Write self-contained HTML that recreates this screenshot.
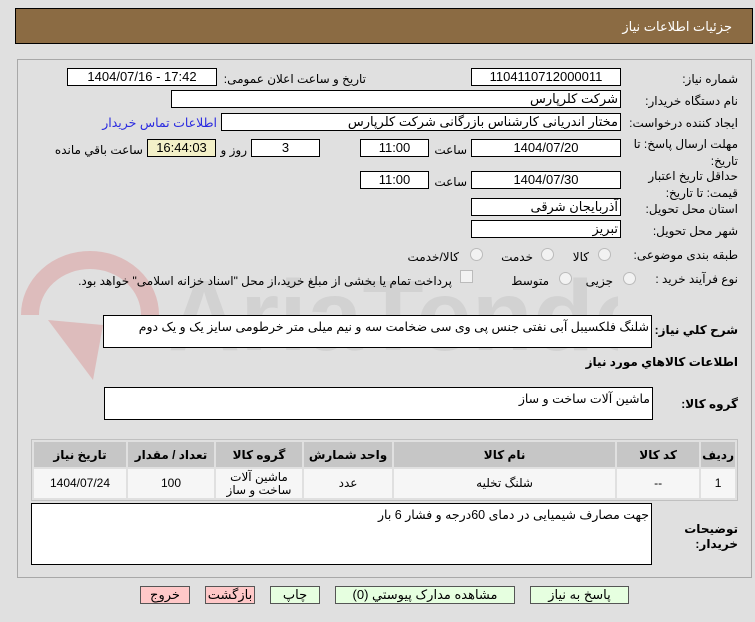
<!DOCTYPE html>
<html><head><meta charset="utf-8"><style>
body{margin:0;width:755px;height:622px;background:#e0e0e0;font-family:"Liberation Sans","DejaVu Sans",sans-serif;font-size:12px;color:#000;position:relative;overflow:hidden}
.a{position:absolute}
.hdr{left:15px;top:8px;width:736px;height:34px;background:#8b6b43;border:1px solid #000}
.hdr span{position:absolute;right:20px;top:10px;color:#fff;font-size:13px}
.panel{left:17px;top:59px;width:733px;height:517px;border:1px solid #a8a8a8;background:#e0e0e0}
.box{position:absolute;background:#fff;border:1px solid #000;box-sizing:border-box;height:18px;line-height:16px;text-align:center;font-size:13px}
.r{text-align:right;padding-right:2px}
.l{position:absolute;white-space:nowrap;direction:rtl}
.ta{position:absolute;background:#fff;border:1px solid #000;box-sizing:border-box;direction:rtl;padding:3px 2px;font-size:12.5px}
.rad{position:absolute;width:11px;height:11px;border-radius:50%;border:1px solid #bbb;background:#f2f2f2}
table{position:absolute;left:31px;top:439px;width:707px;border-collapse:separate;border-spacing:2px;border:1px solid #c0c0c0;background:#e0e0e0;direction:rtl}
th{background:#c6c6c6;height:23px;font-size:12px}
td{background:#f6f6f6;height:27px;text-align:center;font-size:12px;line-height:13px}
.btn{position:absolute;top:586px;height:18px;border:1px solid #555;box-sizing:border-box;text-align:center;line-height:16px;font-size:13px;background:#e6ffe0}
</style></head><body>
<div class="a hdr"><span>جزئیات اطلاعات نیاز</span></div>
<div class="a panel"></div>
<svg class="a" style="left:18px;top:240px" width="600" height="150" viewBox="0 0 600 150">
<path d="M12 75 A60 55 0 0 1 132 75" fill="none" stroke="#dcb0b0" stroke-width="18" opacity=".75"/>
<path d="M30 80 L75 140 L85 85 Z" fill="#dcb0b0" opacity=".75"/>
<text x="150" y="110" font-size="100" font-weight="bold" fill="#c8c8c8" opacity=".55" font-family="Liberation Sans">AriaTender.net</text>
</svg>
<div class="l" style="right:17px;top:72px">شماره نیاز:</div>
<div class="box" style="left:471px;top:68px;width:150px">1104110712000011</div>
<div class="l" style="right:389px;top:72px">تاریخ و ساعت اعلان عمومی:</div>
<div class="box" style="left:67px;top:68px;width:150px">1404/07/16 - 17:42</div>
<div class="l" style="right:17px;top:94px">نام دستگاه خریدار:</div>
<div class="box r" style="left:171px;top:90px;width:450px">شرکت کلرپارس</div>
<div class="l" style="right:17px;top:116px">ایجاد کننده درخواست:</div>
<div class="box r" style="left:221px;top:113px;width:400px">مختار اندریانی کارشناس بازرگانی شرکت کلرپارس</div>
<div class="l" style="right:538px;top:115px;color:#2a2ae0;font-size:12.5px">اطلاعات تماس خریدار</div>
<div class="l" style="right:17px;top:136px;line-height:17px;text-align:right">مهلت ارسال پاسخ: تا<br>تاریخ:</div>
<div class="box" style="left:471px;top:139px;width:150px">1404/07/20</div>
<div class="l" style="right:288px;top:143px">ساعت</div>
<div class="box" style="left:360px;top:139px;width:69px">11:00</div>
<div class="box" style="left:251px;top:139px;width:69px">3</div>
<div class="l" style="right:508px;top:143px">روز و</div>
<div class="box" style="left:147px;top:139px;width:69px;background:#f3f0c8">16:44:03</div>
<div class="l" style="right:612px;top:143px">ساعت باقي مانده</div>
<div class="l" style="right:17px;top:168px;line-height:17px;text-align:right">حداقل تاریخ اعتبار<br>قیمت: تا تاریخ:</div>
<div class="box" style="left:471px;top:171px;width:150px">1404/07/30</div>
<div class="l" style="right:288px;top:175px">ساعت</div>
<div class="box" style="left:360px;top:171px;width:69px">11:00</div>
<div class="l" style="right:17px;top:202px">استان محل تحویل:</div>
<div class="box r" style="left:471px;top:198px;width:150px">آذربایجان شرقی</div>
<div class="l" style="right:17px;top:224px">شهر محل تحویل:</div>
<div class="box r" style="left:471px;top:220px;width:150px">تبریز</div>
<div class="l" style="right:17px;top:248px">طبقه بندی موضوعی:</div>
<div class="rad" style="left:598px;top:248px"></div><div class="l" style="right:166px;top:250px">کالا</div>
<div class="rad" style="left:541px;top:248px"></div><div class="l" style="right:222px;top:250px">خدمت</div>
<div class="rad" style="left:470px;top:248px"></div><div class="l" style="right:296px;top:250px">کالا/خدمت</div>
<div class="l" style="right:17px;top:272px">نوع فرآیند خرید :</div>
<div class="rad" style="left:623px;top:272px"></div><div class="l" style="right:142px;top:274px">جزیی</div>
<div class="rad" style="left:559px;top:272px"></div><div class="l" style="right:206px;top:274px">متوسط</div>
<div class="a" style="left:460px;top:270px;width:11px;height:11px;border:1px solid #bbb;background:#f2f2f2"></div>
<div class="l" style="right:303px;top:274px">پرداخت تمام یا بخشی از مبلغ خرید،از محل "اسناد خزانه اسلامی" خواهد بود.</div>
<div class="l" style="right:17px;top:323px;font-weight:bold">شرح كلي نياز:</div>
<div class="ta" style="left:103px;top:315px;width:549px;height:33px">شلنگ فلکسیبل آبی نفتی جنس پی وی سی ضخامت سه و نیم میلی متر خرطومی سایز یک و یک دوم</div>
<div class="l" style="right:17px;top:355px;font-weight:bold">اطلاعات كالاهاي مورد نياز</div>
<div class="l" style="right:17px;top:397px;font-weight:bold">گروه کالا:</div>
<div class="ta" style="left:104px;top:387px;width:549px;height:33px">ماشین آلات ساخت و ساز</div>
<table>
<tr><th style="width:25px">رديف</th><th style="width:80px">کد کالا</th><th>نام کالا</th><th style="width:86px">واحد شمارش</th><th style="width:84px">گروه کالا</th><th style="width:84px">تعداد / مقدار</th><th style="width:90px">تاریخ نیاز</th></tr>
<tr><td>1</td><td>--</td><td>شلنگ تخلیه</td><td>عدد</td><td>ماشین آلات<br>ساخت و ساز</td><td>100</td><td>1404/07/24</td></tr>
</table>
<div class="l" style="right:17px;top:522px;font-weight:bold;line-height:15px;text-align:right">توضیحات<br>خریدار:</div>
<div class="ta" style="left:31px;top:503px;width:621px;height:62px">جهت مصارف شیمیایی در دمای 60درجه و فشار 6 بار</div>
<div class="btn" style="left:140px;width:50px;background:#ffc8c8">خروج</div>
<div class="btn" style="left:205px;width:50px;background:#ffc8c8">بازگشت</div>
<div class="btn" style="left:270px;width:50px">چاپ</div>
<div class="btn" style="left:335px;width:180px">مشاهده مدارک پیوستي (0)</div>
<div class="btn" style="left:530px;width:99px">پاسخ به نیاز</div>
</body></html>
